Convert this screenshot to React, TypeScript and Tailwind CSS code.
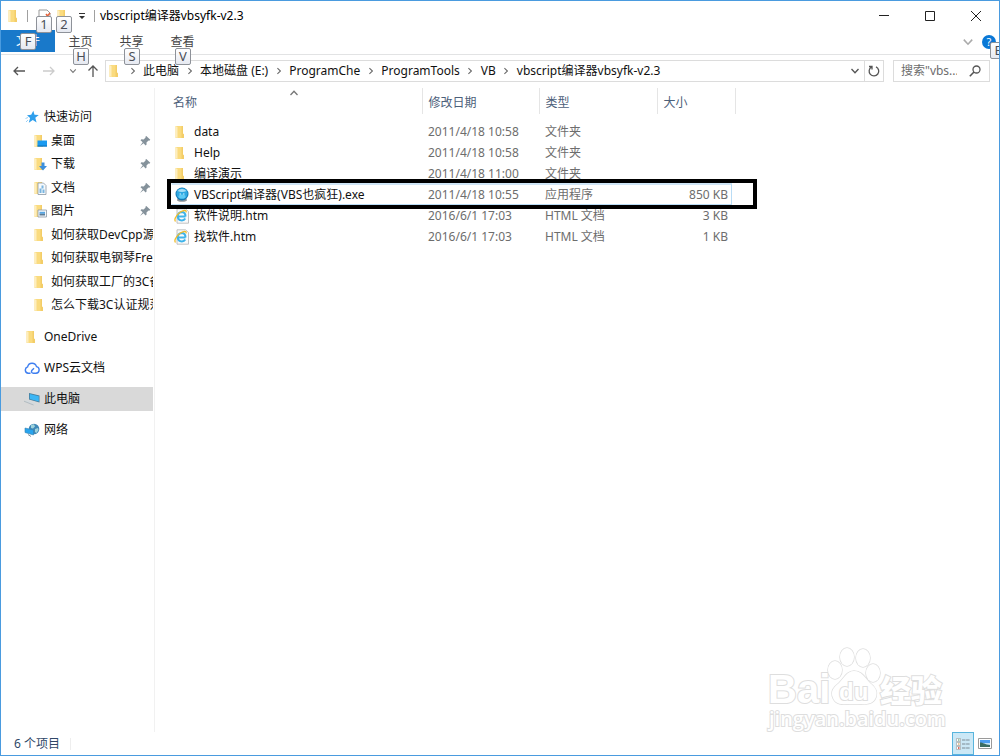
import type { ReactNode } from "react";

const folders = [
  "如何获取DevCpp源",
  "如何获取电钢琴Free",
  "如何获取工厂的3C备",
  "怎么下载3C认证规范",
];

const crumbs = ["此电脑", "本地磁盘 (E:)", "ProgramChe", "ProgramTools", "VB", "vbscript编译器vbsyfk-v2.3"];

const files = [
  { kind: "folder", name: "data", date: "2011/4/18 10:58", type: "文件夹", size: "" },
  { kind: "folder", name: "Help", date: "2011/4/18 10:58", type: "文件夹", size: "" },
  { kind: "folder", name: "编译演示", date: "2011/4/18 11:00", type: "文件夹", size: "" },
  { kind: "exe", name: "VBScript编译器(VBS也疯狂).exe", date: "2011/4/18 10:55", type: "应用程序", size: "850 KB" },
  { kind: "htm", name: "软件说明.htm", date: "2016/6/1 17:03", type: "HTML 文档", size: "3 KB" },
  { kind: "htm", name: "找软件.htm", date: "2016/6/1 17:03", type: "HTML 文档", size: "1 KB" },
];

function FolderIcon({ children }: { children?: ReactNode }) {
  return (
    <svg viewBox="0 0 14 14" className="w-3.5 h-3.5 shrink-0">
      <path d="M1.500 1H9v7.500l1 1V13H1.500z" fill="#fadb7f" />
      <path d="M7.500 1H9v7.500l1 1V13H7.500z" fill="#f3cd68" />
      <path d="M1.500 1L3.500 2v11l-2-.8z" fill="#fdeebf" />
      {children}
    </svg>
  );
}

function DesktopIcon() {
  return (
    <FolderIcon>
      <path d="M4.500 6.500h9.500v6H4.500z" fill="#1a9af0" />
      <path d="M4.500 11.500h9.500v1H4.500z" fill="#0c6fb8" />
    </FolderIcon>
  );
}

function DownloadIcon() {
  return (
    <FolderIcon>
      <path d="M8.500 5.500h3V9H14l-4 4.500L6 9h2.500z" fill="#3b8fdc" />
    </FolderIcon>
  );
}

function DocumentIcon() {
  return (
    <FolderIcon>
      <path d="M5 2h5.500L13 4.500v9H5z" fill="#f7fafc" stroke="#8b98a5" strokeWidth=".8" />
      <path d="M6.500 7.500h2V12h-2zM8.500 4.500h2v3h-2zM9.500 8.500h2V12h-2z" fill="#79b4df" />
    </FolderIcon>
  );
}

function PictureIcon() {
  return (
    <FolderIcon>
      <path d="M5 6h8.500v7H5z" fill="#f5f8fb" stroke="#8b98a5" strokeWidth=".8" />
      <path d="M6.500 7.800H12v2H6.500z" fill="#57a7e5" />
      <path d="M6.500 9.800H12v1.700H6.500z" fill="#5c7c96" />
    </FolderIcon>
  );
}

function PinIcon() {
  return (
    <svg viewBox="0 0 12 12" className="w-3 h-3 shrink-0" fill="#85929b">
      <path d="M7.300 1l4 3.800-1 .9-.8-.2-2 2 .1 2.100-1 .9-2.100-2.200L1 11l2.700-3.700L1.500 5.200l.9-.9 2.200.1 2-2-.2-.6z" />
    </svg>
  );
}

function StarIcon() {
  return (
    <svg viewBox="0 0 14 14" className="w-3.5 h-3.5 shrink-0">
      <path d="M8.300.8l1.200 3.900 4.300.4-3.500 2.700 1.300 4.700-3.800-2.400-4 2.700 1.300-4.700L2 5.200l4.200-.5z" fill="#2f9fec" />
      <path d="M.5 8.500l2.500-1M1 12l2-2" stroke="#9bd0f5" />
    </svg>
  );
}

function CloudIcon() {
  return (
    <svg viewBox="0 0 16 14" className="w-4 h-3.5 shrink-0" fill="none" stroke="#3f7ff0" strokeWidth="1.400">
      <path d="M6.500 12.300H4.200A3.300 3.300 0 0 1 3.600 5.900 4.600 4.600 0 0 1 12.500 5.600a3.400 3.400 0 0 1-.5 6.700H9.500C7.500 12.300 7 10.500 8 9.300l2-2" />
    </svg>
  );
}

function ComputerIcon() {
  return (
    <svg viewBox="0 0 16 14" className="w-4 h-3.5 shrink-0">
      <path d="M5 1L15.500 3.500v7L5 7.500z" fill="#477e9d" />
      <path d="M5.800 2L14.800 4.200v5.200L5.800 7z" fill="#3cb6f5" />
      <path d="M0 9l4-.8 8 3.300-2.500 1.500z" fill="#d3d9dd" />
      <path d="M0 9.200l9.500 3.800" stroke="#9ba8b0" strokeWidth=".6" />
    </svg>
  );
}

function NetworkIcon() {
  return (
    <svg viewBox="0 0 16 14" className="w-4 h-3.5 shrink-0">
      <circle cx="10" cy="6" r="5.300" fill="#4089b8" />
      <path d="M7 2l3-.8 1 2.300-2 2-2-.5zM11 6l3-1 .5 2-2 3-1.500-1z" fill="#9fd3dc" />
      <path d="M1 5l8.500 2v5L1 9.500z" fill="#28a4ee" stroke="#3481b0" strokeWidth=".6" />
      <path d="M4 11.500l3 2" stroke="#7e8e99" />
    </svg>
  );
}

function ExeIcon() {
  return (
    <svg viewBox="0 0 16 16" className="w-4 h-4 shrink-0">
      <ellipse cx="8" cy="13" rx="5" ry="1.800" fill="#8d9297" />
      <circle cx="8" cy="7" r="6.500" fill="#1478b4" />
      <circle cx="8" cy="6.500" r="5.600" fill="#2fa8e2" />
      <ellipse cx="8" cy="9.500" rx="3.500" ry="2" fill="#5fcaf5" />
      <path d="M3.500 4a5.500 4.500 0 0 1 9 0Q8 6 3.500 4z" fill="#a9def6" />
      <path d="M5.500 7h1.500M9 7h1.500" stroke="#d9f4ff" />
    </svg>
  );
}

function HtmIcon() {
  return (
    <svg viewBox="0 0 16 16" className="w-4 h-4 shrink-0">
      <path d="M3 .8h8.500L14.500 3.500v11.700H3z" fill="#fafafa" stroke="#b3b3b3" strokeWidth=".8" />
      <path d="M11.500 8.500H4.500M11.500 8.500C11.500 5.500 9.800 4 7.800 4A4.200 4.200 0 0 0 3.700 8.300c0 2.500 1.800 4.100 4.200 4.100 1.500 0 2.700-.7 3.300-1.900" fill="none" stroke="#3db3ea" strokeWidth="2" />
      <path d="M1.500 13.500C-.8 11 5 2.800 10.800 2.300c1.200 0 1.500.8 1.200 2" fill="none" stroke="#f0bd2d" strokeWidth="1.300" />
    </svg>
  );
}

function FileIcon({ kind }: { kind: string }) {
  if (kind === "exe") return <ExeIcon />;
  if (kind === "htm") return <HtmIcon />;
  return (
    <span className="w-4 flex">
      <FolderIcon />
    </span>
  );
}

function Chevron({ className }: { className: string }) {
  return (
    <svg viewBox="0 0 10 10" className={className} fill="none" stroke="currentColor" strokeWidth="1.300">
      <path d="M1.500 3l3.500 3.800L8.500 3" />
    </svg>
  );
}

function KeyTip({ children, className }: { children: string; className: string }) {
  return (
    <span
      className={`absolute z-10 w-4 h-[17px] flex items-center justify-center rounded-xs border border-[#8e9299] bg-linear-to-b from-white to-[#e6e9f1] text-[13px] leading-none text-[#4b4f57] ${className}`}
    >
      {children}
    </span>
  );
}

function Tab({ label, tip }: { label: string; tip: string }) {
  return (
    <button className="relative w-[51px] h-full text-[#444]">
      {label}
      <KeyTip className="left-[18px] top-[18px]">{tip}</KeyTip>
    </button>
  );
}

function TitleBar() {
  return (
    <header className="flex items-center h-[29px] pl-1.5">
      <FolderIcon />
      <span className="ml-1.5 w-px h-3 bg-[#a0a0a0]" />
      <button aria-label="属性" className="relative ml-2 w-4 h-4">
        <svg viewBox="0 0 16 16" className="w-4 h-4">
          <path d="M3 2h8l3 3v9H3z" fill="#fff" stroke="#999" />
          <path d="M10 6l1.500 2 2.500-3" stroke="#e2633c" fill="none" strokeWidth="1.500" />
        </svg>
        <KeyTip className="left-0 top-2">1</KeyTip>
      </button>
      <button aria-label="新建文件夹" className="relative ml-1 w-4 h-4">
        <FolderIcon />
        <KeyTip className="left-0 top-2">2</KeyTip>
      </button>
      <button aria-label="自定义快速访问工具栏" className="ml-1.5 w-2">
        <svg viewBox="0 0 8 8" className="w-2 h-2" fill="#333">
          <path d="M1 1h6v1H1zM1 4h6L4 7z" />
        </svg>
      </button>
      <span className="ml-2 w-px h-3 bg-[#a0a0a0]" />
      <h1 className="ml-[5px] text-black">vbscript编译器vbsyfk-v2.3</h1>
      <div className="ml-auto flex h-full text-[#222]">
        <button aria-label="最小化" className="w-[46px] flex items-center justify-center">
          <svg viewBox="0 0 10 10" className="w-2.5 h-2.5" stroke="currentColor">
            <path d="M0 4.500h10" />
          </svg>
        </button>
        <button aria-label="最大化" className="w-[46px] flex items-center justify-center">
          <svg viewBox="0 0 10 10" className="w-2.5 h-2.5" fill="none" stroke="currentColor">
            <path d="M.5.5h9v9h-9z" />
          </svg>
        </button>
        <button aria-label="关闭" className="w-[46px] flex items-center justify-center">
          <svg viewBox="0 0 10 10" className="w-2.5 h-2.5" stroke="currentColor">
            <path d="M0 0l10 10M10 0L0 10" />
          </svg>
        </button>
      </div>
    </header>
  );
}

function Ribbon() {
  return (
    <div className="flex h-[25px] border-b border-[#e2e3e4]">
      <button className="relative w-[54px] h-[22px] bg-[#1979ca] text-white">
        文件
        <KeyTip className="left-[19px] top-[3px]">F</KeyTip>
      </button>
      <div className="flex h-6">
        <Tab label="主页" tip="H" />
        <Tab label="共享" tip="S" />
        <Tab label="查看" tip="V" />
      </div>
      <div className="ml-auto flex items-center gap-2 h-[23px]">
        <button aria-label="展开功能区" className="text-[#aaa]">
          <Chevron className="w-3 h-3" />
        </button>
        <button
          aria-label="帮助"
          className="relative w-3.5 h-3.5 mr-[3px] rounded-full bg-[#0a78d6] text-white text-[11px] leading-none"
        >
          ?
          <KeyTip className="left-2 top-[7px]">E</KeyTip>
        </button>
      </div>
    </div>
  );
}

function AddressBar() {
  return (
    <div className="flex items-center pl-3 pr-[9px] pt-[5px]">
      <button aria-label="后退" className="text-[#555]">
        <svg viewBox="0 0 12 12" className="w-3 h-3" fill="none" stroke="currentColor" strokeWidth="1.300">
          <path d="M12 6H1M5 2L1 6l4 4" />
        </svg>
      </button>
      <button aria-label="前进" className="ml-[18px] text-[#ccc]">
        <svg viewBox="0 0 12 12" className="w-3 h-3" fill="none" stroke="currentColor" strokeWidth="1.300">
          <path d="M0 6h11M7 2l4 4-4 4" />
        </svg>
      </button>
      <button aria-label="最近位置" className="ml-3.5 text-[#777]">
        <Chevron className="w-2 h-2" />
      </button>
      <button aria-label="向上" className="ml-2.5 text-[#555]">
        <svg viewBox="0 0 12 12" className="w-3 h-3" fill="none" stroke="currentColor" strokeWidth="1.300">
          <path d="M6 12V1M1.500 5.500L6 1l4.500 4.500" />
        </svg>
      </button>
      <div className="ml-1.5 flex-1 min-w-0 flex items-center h-[22px] border border-[#dcdcdc]">
        <div className="flex items-center pl-0.5 flex-1 min-w-0 overflow-hidden">
          <FolderIcon />
          {crumbs.map((crumb) => (
            <span key={crumb} className="flex items-center shrink-0">
              <span className="w-[21px] flex justify-center text-[#666]">
                <Chevron className="w-2 h-2 -rotate-90" />
              </span>
              <button className="text-[#111]">{crumb}</button>
            </span>
          ))}
        </div>
        <button aria-label="展开地址" className="w-[18px] flex justify-center text-[#555]">
          <Chevron className="w-2.5 h-2.5" />
        </button>
        <button aria-label="刷新" className="w-[19px] h-full flex items-center justify-center border-l border-[#dcdcdc] text-[#555]">
          <svg viewBox="0 0 12 12" className="w-3 h-3" fill="none" stroke="currentColor" strokeWidth="1.300">
            <path d="M8 1.800A4.800 4.800 0 1 1 3.500 2M1 1.500h3v3" />
          </svg>
        </button>
      </div>
      <label className="ml-[9px] w-[97px] h-[22px] flex items-center border border-[#dcdcdc] pl-[7px] pr-2">
        <input
          type="search"
          aria-label="搜索"
          placeholder={'搜索"vbs...'}
          className="w-0 flex-1 bg-transparent outline-none placeholder:text-[#6d6d6d]"
        />
        <svg viewBox="0 0 12 12" className="w-3 h-3 shrink-0" fill="none" stroke="#555" strokeWidth="1.300">
          <circle cx="7.500" cy="4.500" r="3.500" />
          <path d="M5 7L.8 11.200" strokeWidth="1.600" />
        </svg>
      </label>
    </div>
  );
}

function NavItem({ icon, label, pinned }: { icon: ReactNode; label: string; pinned?: boolean }) {
  return (
    <li className="flex items-center min-w-0">
      <a href="#" className="flex items-center flex-1 min-w-0 pl-8">
        {icon}
        <span className={`ml-1 flex-1 min-w-0 overflow-hidden whitespace-nowrap ${pinned ? "mr-1" : ""}`}>{label}</span>
        {pinned && (
          <span className="pr-0.5">
            <PinIcon />
          </span>
        )}
      </a>
    </li>
  );
}

function NavRoot({ icon, label, active }: { icon: ReactNode; label: string; active?: boolean }) {
  return (
    <a href="#" className={`flex items-center h-6 pl-[23px] ${active ? "bg-[#d9d9d9]" : ""}`}>
      <span className="w-4 flex justify-center">{icon}</span>
      <span className="ml-1">{label}</span>
    </a>
  );
}

function Sidebar() {
  return (
    <nav className="w-[154px] shrink-0 border-r border-[#f1f1f1] pt-[17px] pr-px text-[#111]">
      <NavRoot icon={<StarIcon />} label="快速访问" />
      <ul className="grid grid-cols-1 auto-rows-fr h-[188px]">
        <NavItem icon={<DesktopIcon />} label="桌面" pinned />
        <NavItem icon={<DownloadIcon />} label="下载" pinned />
        <NavItem icon={<DocumentIcon />} label="文档" pinned />
        <NavItem icon={<PictureIcon />} label="图片" pinned />
        {folders.map((name) => (
          <NavItem key={name} icon={<FolderIcon />} label={name} />
        ))}
      </ul>
      <div className="flex flex-col gap-[7px] mt-2">
        <NavRoot icon={<FolderIcon />} label="OneDrive" />
        <NavRoot icon={<CloudIcon />} label="WPS云文档" />
        <NavRoot icon={<ComputerIcon />} label="此电脑" active />
        <NavRoot icon={<NetworkIcon />} label="网络" />
      </div>
    </nav>
  );
}

function FileTable() {
  return (
    <div className="relative">
      <table className="table-fixed w-[568px] text-left">
        <thead className="text-[#4c607a]">
          <tr className="h-[26px]">
            <th className="relative w-[255px] pl-1.5 pt-[3px] font-normal border-r border-[#e5e5e5]">
              名称
              <Chevron className="absolute left-[122px] top-0 w-2.5 h-2.5 rotate-180 text-[#777]" />
            </th>
            <th className="w-[117px] pl-1.5 pt-[3px] font-normal border-r border-[#e5e5e5]">修改日期</th>
            <th className="w-[118px] pl-1.5 pt-[3px] font-normal border-r border-[#e5e5e5]">类型</th>
            <th className="w-[78px] pl-1.5 pt-[3px] font-normal border-r border-[#e5e5e5]">大小</th>
          </tr>
        </thead>
        <tbody className="text-[#6d6d6d]">
          <tr className="h-[7px]" aria-hidden="true" />
          {files.map((file) => (
            <tr key={file.name} className="h-[21px]">
              <td className="pl-[7px] text-[#111]">
                <span className="flex items-center gap-1">
                  <FileIcon kind={file.kind} />
                  {file.name}
                </span>
              </td>
              <td className="pl-1.5">{file.date}</td>
              <td className="pl-1.5">{file.type}</td>
              <td className="pr-[7px] text-right">{file.size}</td>
            </tr>
          ))}
        </tbody>
      </table>
      <div className="absolute left-0 top-[91px] w-[590px] h-[30px] border-4 border-black">
        <div className="h-full w-[561px] border border-t-2 border-[#b9dcf5] border-t-[#cfe5f6] border-l-transparent" />
      </div>
    </div>
  );
}

function Watermark() {
  return (
    <svg
      viewBox="0 0 184 90"
      className="absolute right-[50px] bottom-[-2px] w-[184px] h-[90px]"
      fill="#fff"
      stroke="#dedede"
      strokeWidth="1.500"
      paintOrder="stroke"
    >
      <text x="3" y="59" className="text-[40px] font-bold" fontFamily="Liberation Sans, sans-serif" strokeWidth="2">
        Bai
      </text>
      <ellipse cx="70" cy="26" rx="7" ry="9" />
      <ellipse cx="82" cy="13" rx="7" ry="9" />
      <ellipse cx="98" cy="14" rx="7" ry="9" />
      <ellipse cx="108" cy="29" rx="7" ry="9" />
      <path d="M89 27c8 0 11 7 16 12 5 4 8 8 6 14-3 9-13 7-22 7s-18 2-21-6c-3-7 1-11 6-15 5-5 8-12 15-12z" />
      <text x="74" y="56" className="text-2xl font-bold" fontFamily="Liberation Sans, sans-serif" strokeWidth="2">
        du
      </text>
      <text x="115" y="58" className="text-[31px] font-black" fontFamily="Noto Sans CJK SC, sans-serif" strokeWidth="2">
        经验
      </text>
      <text x="4" y="82" className="text-[20px] font-semibold" fontFamily="Open Sans, sans-serif" strokeWidth="2">
        jingyan.baidu.com
      </text>
    </svg>
  );
}

function StatusBar() {
  return (
    <footer className="flex items-center h-[23px] pl-[13px] text-[#2f4768]">
      <span>6 个项目</span>
      <span className="ml-2.5 w-px h-3 bg-[#eee]" />
      <div className="ml-auto flex items-center gap-1 pr-[7px] h-full">
        <button aria-label="详细信息" className="w-[22px] h-full flex items-center justify-center border border-[#58b5dd] bg-[#cbe8f6]">
          <svg viewBox="0 0 14 12" className="w-3.5 h-3">
            <path d="M.5.500h4v3h-4zM.5 4.500h4v3h-4zM.5 8.500h4v3h-4z" fill="#fff" stroke="#999" strokeWidth=".6" />
            <path d="M2 2h1.500" stroke="#3b8a5b" />
            <path d="M2 6h1.500" stroke="#d08a30" />
            <path d="M2 10h1.500" stroke="#d23d2e" strokeWidth="1.500" />
            <path d="M6 2h8M6 6h8M6 10h8" stroke="#7d8b94" strokeDasharray="3.500 .6" />
          </svg>
        </button>
        <button aria-label="大图标">
          <svg viewBox="0 0 14 11" className="w-3.5 h-[11px]">
            <path d="M.5.500h13v10H.5z" fill="#fff" stroke="#9a9a9a" />
            <path d="M2 2h10v3H2z" fill="#4d9df0" />
            <path d="M2 5h10v2H2z" fill="#bfe0f7" />
            <path d="M2 4.500c3 0 5 2 10 2.500v2H2z" fill="#3d6d62" />
          </svg>
        </button>
      </div>
    </footer>
  );
}

export default function App() {
  return (
    <div className="min-h-screen flex flex-col overflow-hidden border border-[#4a9bdf] bg-white text-[12px] leading-4 font-['Noto_Sans','Noto_Sans_CJK_SC',sans-serif]">
      <TitleBar />
      <Ribbon />
      <AddressBar />
      <div className="relative flex-1 flex">
        <div className="flex flex-1 min-w-0 pt-1.5">
          <Sidebar />
          <main className="flex-1 min-w-0 pl-3">
            <FileTable />
          </main>
        </div>
        <Watermark />
      </div>
      <StatusBar />
    </div>
  );
}
